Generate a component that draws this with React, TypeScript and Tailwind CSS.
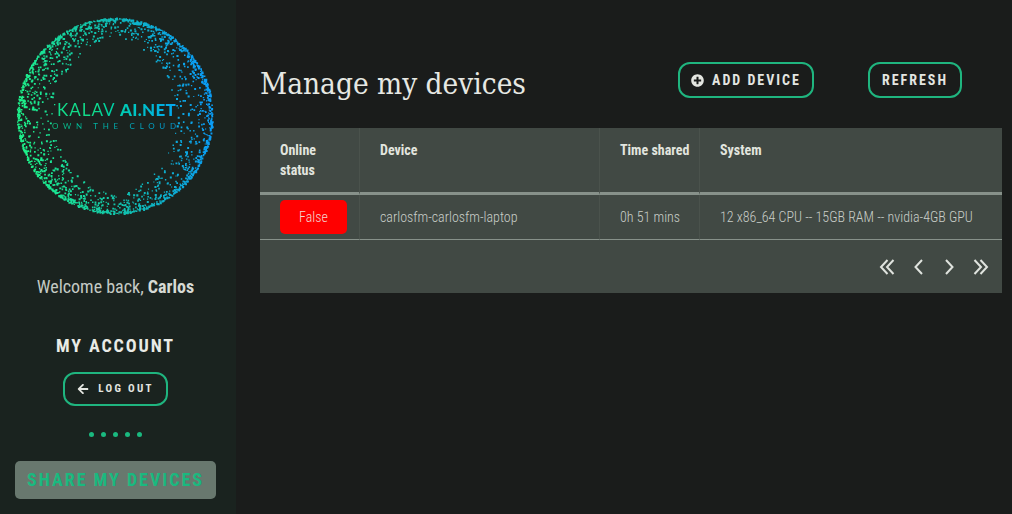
import { FaArrowLeft, FaPlusCircle } from "react-icons/fa";

// particle ring of the logo, seeded so the picture stays the same
function ringPath() {
  let seed = 1234;
  const rnd = () => {
    seed = (seed * 16807) % 2147483647;
    return seed / 2147483647;
  };
  let d = "";
  for (let i = 0; i < 2100; i++) {
    const a = rnd() * Math.PI * 2;
    const depth = Math.pow(rnd(), 3.2) * 36 * (0.5 + 0.5 * Math.abs(Math.cos(a)));
    const r = 96.5 - depth + rnd() * 1.5;
    const x = 114.5 + Math.cos(a) * r;
    const y = 115.5 + Math.sin(a) * r;
    const s = 1.1 + rnd() * 1;
    d += `M${x.toFixed(1)} ${y.toFixed(1)}h${s.toFixed(1)}v${s.toFixed(1)}h-${s.toFixed(1)}z`;
  }
  return d;
}

function Logo() {
  return (
    <div className="relative w-[231px] h-[232px] shrink-0">
      <svg width="231" height="232" viewBox="0 0 231 232">
        <defs>
          <linearGradient id="ring" gradientUnits="userSpaceOnUse" x1="25" y1="125" x2="205" y2="100">
            <stop offset="0" stopColor="#1df08a" />
            <stop offset="0.5" stopColor="#10bdb0" />
            <stop offset="1" stopColor="#0a9df5" />
          </linearGradient>
        </defs>
        <path d={ringPath()} fill="url(#ring)" />
      </svg>
      <div className="absolute left-[57px] top-[100px] w-[120px] whitespace-nowrap bg-gradient-to-r from-[#12dc8a] from-30% to-[#0aa5f0] bg-clip-text text-transparent font-['Lato',sans-serif] text-[17px] leading-[20px]">
        <span className="font-normal tracking-[1px]">KALAV</span> <span className="font-black tracking-[0.3px]">AI.NET</span>
      </div>
      <div className="absolute left-[52px] top-[121px] w-[132px] whitespace-nowrap bg-gradient-to-r from-[#10c484] to-[#0a9ae0] bg-clip-text text-transparent font-['Lato',sans-serif] text-[8px] leading-[10px] tracking-[4.7px]">
        OWN THE CLOUD
      </div>
    </div>
  );
}

function OutlineButton({ children, className }: { children: React.ReactNode; className: string }) {
  return (
    <button className={"flex items-center justify-center border-2 border-[#1fb57f] rounded-xl font-bold uppercase text-[#e4e6e1] " + className}>
      {children}
    </button>
  );
}

function Sidebar() {
  return (
    <aside className="w-[236px] h-[514px] shrink-0 pr-[5px] bg-[#1a231f] flex flex-col items-center overflow-hidden">
      <Logo />
      <p className="mt-[44px] text-[18px] leading-[22px] font-normal text-[#c4cac4] [font-stretch:75%]">
        Welcome back, <b className="font-bold text-[#d6dad4]">Carlos</b>
      </p>
      <h3 className="mt-[37px] text-[18px] leading-[22px] font-bold tracking-[1.9px] text-[#e9ebe6] [font-stretch:75%]">MY ACCOUNT</h3>
      <OutlineButton className="mt-[15px] w-[105px] h-[34px] gap-[9px] text-[11px] tracking-[2.3px] [font-stretch:75%]">
        <FaArrowLeft size={12} />
        Log out
      </OutlineButton>
      <div className="mt-[26px] flex gap-[7px]">
        {[0, 1, 2, 3, 4].map((i) => (
          <span key={i} className="w-[5px] h-[5px] rounded-full bg-[#1ab97f]" />
        ))}
      </div>
      <button className="mt-[24px] w-[201px] h-[38px] pb-[2px] rounded-[5px] bg-[#68786e] text-[#1ab97f] text-[18px] font-bold tracking-[2px] [font-stretch:75%]">
        SHARE MY DEVICES
      </button>
    </aside>
  );
}

function Chevron({ dir, double }: { dir: "left" | "right"; double?: boolean }) {
  let points = ["11,1 4.5,8 11,15"];
  if (dir === "right") points = ["5,1 11.5,8 5,15"];
  if (double) points = dir === "left" ? ["8.5,1 2,8 8.5,15", "14.5,1 8,8 14.5,15"] : ["7.5,1 14,8 7.5,15", "1.5,1 8,8 1.5,15"];
  return (
    <svg width="16" height="16" viewBox="0 0 16 16" fill="none" stroke="#dfe3de" strokeWidth="2">
      {points.map((p) => (
        <polyline key={p} points={p} />
      ))}
    </svg>
  );
}

const headCell = "h-[67px] px-[20px] pt-[12px] align-top border-b-[3px] border-[#87918a]";
const bodyCell = "h-[45px] px-[20px] border-b border-[#87918a]";

function DeviceTable() {
  return (
    <div className="mt-[30px] w-[742px] bg-[#414944] text-[14px] [font-stretch:75%]">
      <table className="w-full table-fixed border-separate border-spacing-0">
        <thead>
          <tr className="text-left font-bold text-[#e2e5df] leading-[20px]">
            <th className={"w-[100px] border-r border-r-[#4a524c] " + headCell}>
              Online
              <br />
              status
            </th>
            <th className={"w-[240px] border-r border-r-[#4a524c] " + headCell}>Device</th>
            <th className={"w-[100px] border-r border-r-[#4a524c] whitespace-nowrap " + headCell}>Time shared</th>
            <th className={headCell}>System</th>
          </tr>
        </thead>
        <tbody>
          <tr className="font-light text-[#c9cec8]">
            <td className={"border-r border-r-[#4a524c] " + bodyCell}>
              <span className="flex items-center justify-center w-[67px] h-[34px] rounded-[5px] bg-[#ff0000] text-[#f3d7d0]">False</span>
            </td>
            <td className={"border-r border-r-[#4a524c] " + bodyCell}>carlosfm-carlosfm-laptop</td>
            <td className={"border-r border-r-[#4a524c] whitespace-nowrap " + bodyCell}>0h 51 mins</td>
            <td className={"whitespace-nowrap " + bodyCell}>12 x86_64 CPU -- 15GB RAM -- nvidia-4GB GPU</td>
          </tr>
        </tbody>
      </table>
      <div className="h-[53px] flex items-center justify-end pr-[13px]">
        <Chevron dir="left" double />
        <span className="ml-[16px]"><Chevron dir="left" /></span>
        <span className="ml-[14px]"><Chevron dir="right" /></span>
        <span className="ml-[16px]"><Chevron dir="right" double /></span>
      </div>
    </div>
  );
}

export default function App() {
  return (
    <div className="flex w-[1012px] h-[514px] overflow-hidden bg-[#1a1c1b] font-['Roboto',sans-serif]">
      <Sidebar />
      <main className="flex-1 pl-[24px] pt-[62px]">
        <div className="flex items-start">
          <h1 className="w-[418px] h-[36px] font-['DejaVu_Serif',serif] font-normal [font-stretch:75%] text-[29.5px] leading-[44px] text-[#e6e8e3]">Manage my devices</h1>
          <OutlineButton className="w-[136px] h-[36px] gap-[8px] text-[14px] tracking-[2px] [font-stretch:75%]">
            <FaPlusCircle size={13} />
            Add device
          </OutlineButton>
          <OutlineButton className="ml-[54px] w-[94px] h-[36px] text-[14px] tracking-[2px] [font-stretch:75%]">Refresh</OutlineButton>
        </div>
        <DeviceTable />
      </main>
    </div>
  );
}
